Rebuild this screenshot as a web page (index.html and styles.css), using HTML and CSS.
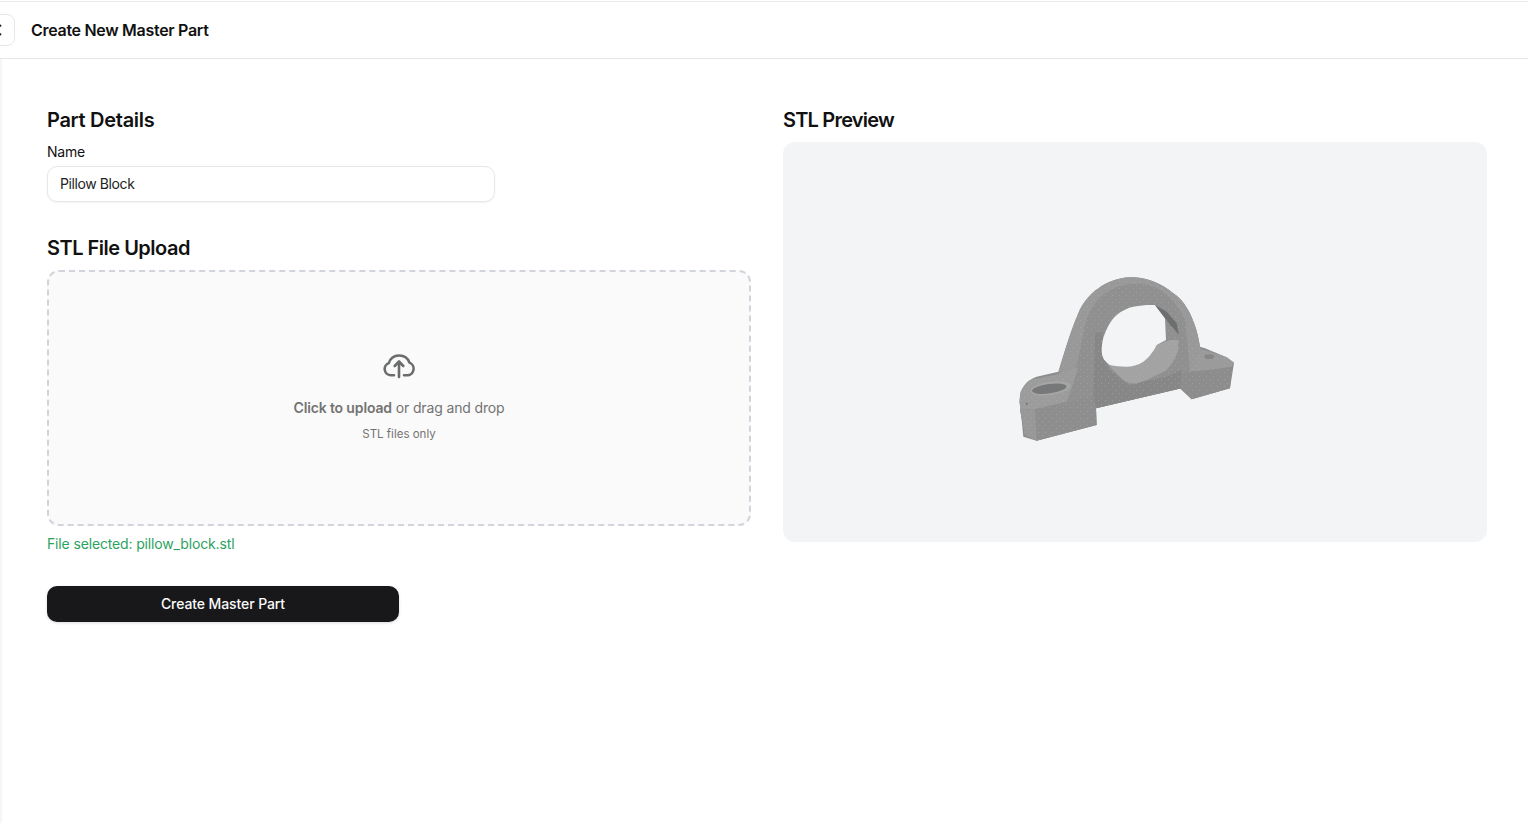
FILE: index.html
```html
<!DOCTYPE html>
<html lang="en">
<head>
<meta charset="utf-8">
<title>Create New Master Part</title>
<link rel="stylesheet" href="styles.css">
</head>
<body>
<header class="topbar">
  <button class="back" aria-label="Back">
    <svg class="back-icon" viewBox="0 0 16 16" width="16" height="16"><path d="M10 3 5 8l5 5"/></svg>
  </button>
  <h1 class="page-title">Create New Master Part</h1>
</header>
<main class="content">
  <section class="col">
    <h2 class="section-title title-details">Part Details</h2>
    <label class="field-label" for="name">Name</label>
    <input class="text-input" id="name" value="Pillow Block">
    <h2 class="section-title upload-title">STL File Upload</h2>
    <div class="dropzone">
      <svg class="cloud" viewBox="0 0 32 32" width="32" height="32">
        <path d="M11 25.3H8a6.3 6.3 0 0 1-2.2-12.2A11 11 0 0 1 26.5 12.6a6.6 6.6 0 0 1-2.3 12.7H21"/>
        <path d="M16 27V11.5M11.7 16 16 11.5l4.3 4.5"/>
      </svg>
      <p class="drop-text"><strong>Click to upload</strong> or drag and drop</p>
      <p class="drop-hint">STL files only</p>
    </div>
    <p class="selected">File selected: pillow_block.stl</p>
    <button class="submit">Create Master Part</button>
  </section>
  <section class="col">
    <h2 class="section-title title-preview">STL Preview</h2>
    <div class="preview">
      <svg class="model" viewBox="0 0 750 570" width="250" height="190">
        <defs>
          <pattern id="dither" width="21" height="21" patternUnits="userSpaceOnUse">
            <rect x="0" y="0" width="3" height="3" fill="#b4b5b4" opacity=".45"/>
            <rect x="9" y="12" width="3" height="3" fill="#b4b5b4" opacity=".45"/>
          </pattern>
        </defs>
        <path id="body" fill="#8b8c8b" d="M70 530 110 542 290 495 288 445 540 385 575 418 690 385 702 308 680 292 615 265 600 260C590 190 560 125 520 100 480 65 430 50 390 52 320 55 260 100 235 160 215 205 195 270 175 335L110 350C80 360 60 385 58 425L62 450Z"/>
        <path fill="#989998" d="M235 160C260 100 320 55 390 52 430 50 480 65 520 100 560 125 590 190 600 260L625 325 565 335 555 180C540 150 510 105 470 85 440 72 420 72 400 72 350 75 310 100 290 125 270 150 260 175 255 200L235 300 200 425 175 342C195 270 215 205 235 160Z"/>
        <path fill="#8f908f" d="M255 200C260 175 270 150 290 125 310 100 350 75 400 72 420 72 440 72 470 85 510 105 540 150 555 180L570 335 545 385 288 445 200 425 235 300Z"/>
        <path fill="#868786" d="M285 220 310 215 305 280 330 330 385 375 500 350 545 330 545 385 288 445 280 410Z"/>
        <path fill="#9b9c9b" d="M60 400C68 380 78 368 90 360L175 342 235 322 215 385 200 425 105 448 60 450Z"/>
        <path fill="#8d8e8d" d="M60 450 105 448 280 410 288 445 290 495 110 542 75 525Z"/>
        <path fill="#979897" d="M60 450 105 448 110 542 75 525Z"/>
        <path fill="#9a9b9a" d="M565 335 605 268 680 292 702 308 692 322 630 330Z"/>
        <path fill="#8c8d8c" d="M545 340 630 330 695 320 690 385 575 418 540 385Z"/>
        <path fill="#a2a3a2" d="M310 295 380 320 430 305 470 255 510 240 535 240 535 270C525 300 510 320 500 330 460 350 440 362 410 370 395 372 380 368 370 360 350 340 325 320 310 295Z"/>
        <path fill="url(#dither)" d="M70 530 110 542 290 495 288 445 540 385 575 418 690 385 702 308 680 292 615 265 600 260C590 190 560 125 520 100 480 65 430 50 390 52 320 55 260 100 235 160 215 205 195 270 175 335L110 350C80 360 60 385 58 425L62 450Z"/>
        <path fill="#f3f4f6" d="M305 270C306 250 308 235 315 220 325 195 335 178 350 165 365 152 385 143 400 140 425 135 445 134 465 135L495 175 498 240 470 255C460 275 445 295 430 305 415 315 395 320 380 320 360 320 345 318 330 315 320 308 312 300 310 295 307 288 305 280 305 270Z"/>
        <path fill="#6d6e70" d="M465 135 500 155 530 190 537 225 520 205 510 195 500 180 495 175Z"/>
        <ellipse cx="152" cy="385" rx="61" ry="20" fill="#a5a6a5" transform="rotate(-8 152 385)"/>
        <ellipse cx="148" cy="386" rx="52" ry="14" fill="#777879" transform="rotate(-8 148 386)"/>
        <ellipse cx="628" cy="290" rx="15" ry="7" fill="#858685"/>
        <circle cx="80" cy="431" r="3" fill="#6d6e6d"/>
      </svg>
    </div>
  </section>
</main>
</body>
</html>
```
FILE: styles.css
```css
* { box-sizing: border-box; }
html, body { height: 100%; }
body {
  margin: 0;
  background: #fff;
  color: #111;
  font-family: Inter, "Noto Sans", sans-serif;
  overflow: hidden;
}
.topbar {
  height: 58px;
  margin-top: 1px;
  border-top: 1px solid #ebe8ea;
  border-bottom: 1px solid #e5e7eb;
  display: flex;
  align-items: center;
  padding-left: 31px;
  position: relative;
}
.back {
  position: absolute;
  left: -17px;
  top: 12px;
  width: 32px;
  height: 32px;
  border: 1px solid #e5e7eb;
  border-radius: 8px;
  background: #fff;
  padding: 0;
  display: flex;
  align-items: center;
  justify-content: center;
}
.back-icon { fill: none; stroke: #222; stroke-width: 1.8; }
.page-title {
  margin: 0;
  font-size: 16px;
  line-height: 24px;
  font-weight: 600;
  letter-spacing: -0.3px;
}
.content {
  display: grid;
  grid-template-columns: 704px 704px;
  column-gap: 32px;
  padding: 47px 0 0 45px;
  height: calc(100% - 59px);
  border-left: 2px solid #f5f6f7;
}
.section-title {
  margin: 0;
  font-size: 20px;
  line-height: 28px;
  font-weight: 600;
  letter-spacing: -0.5px;
}
.title-details { letter-spacing: -0.3px; }
.title-preview { letter-spacing: -0.8px; }
.field-label {
  display: block;
  margin-top: 8px;
  font-size: 14px;
  line-height: 20px;
  font-weight: 400;
  letter-spacing: -0.2px;
}
.text-input {
  display: block;
  width: 448px;
  height: 36px;
  margin-top: 4px;
  padding: 0 12px 2px;
  border: 1px solid #e5e7eb;
  border-radius: 10px;
  background: #fff;
  box-shadow: 0 1px 2px rgba(0,0,0,.05);
  font: inherit;
  font-size: 14px;
  letter-spacing: -0.4px;
  color: #222;
}
.upload-title { margin-top: 32px; }
.dropzone {
  height: 256px;
  margin-top: 8px;
  padding-bottom: 4px;
  border: 2px dashed #d1d5db;
  border-radius: 12px;
  background: #fafafa;
  display: flex;
  flex-direction: column;
  align-items: center;
  justify-content: center;
}
.cloud { fill: none; stroke: #6b6c6e; stroke-width: 2.6; stroke-linecap: round; stroke-linejoin: round; }
.drop-text {
  margin: 16px 0 0;
  font-size: 14px;
  line-height: 20px;
  color: #737373;
  letter-spacing: -0.14px;
}
.drop-text strong { font-weight: 600; }
.drop-hint {
  margin: 8px 0 0;
  font-size: 11.5px;
  line-height: 16px;
  color: #737373;
}
.selected {
  margin: 8px 0 0;
  font-size: 14px;
  line-height: 20px;
  color: #2ca25f;
  letter-spacing: -0.15px;
}
.submit {
  display: block;
  width: 352px;
  height: 36px;
  margin-top: 32px;
  padding: 0 0 2px;
  border: 0;
  border-radius: 10px;
  background: #18181b;
  color: #fafafa;
  font: inherit;
  font-size: 14px;
  font-weight: 500;
  letter-spacing: -0.1px;
  box-shadow: 0 1px 3px rgba(0,0,0,.15);
}
.preview {
  height: 400px;
  margin-top: 8px;
  border-radius: 12px;
  background: #f3f4f6;
  display: flex;
  align-items: center;
  justify-content: center;
}
.model { margin: 26px 20px 0 0; }
```
